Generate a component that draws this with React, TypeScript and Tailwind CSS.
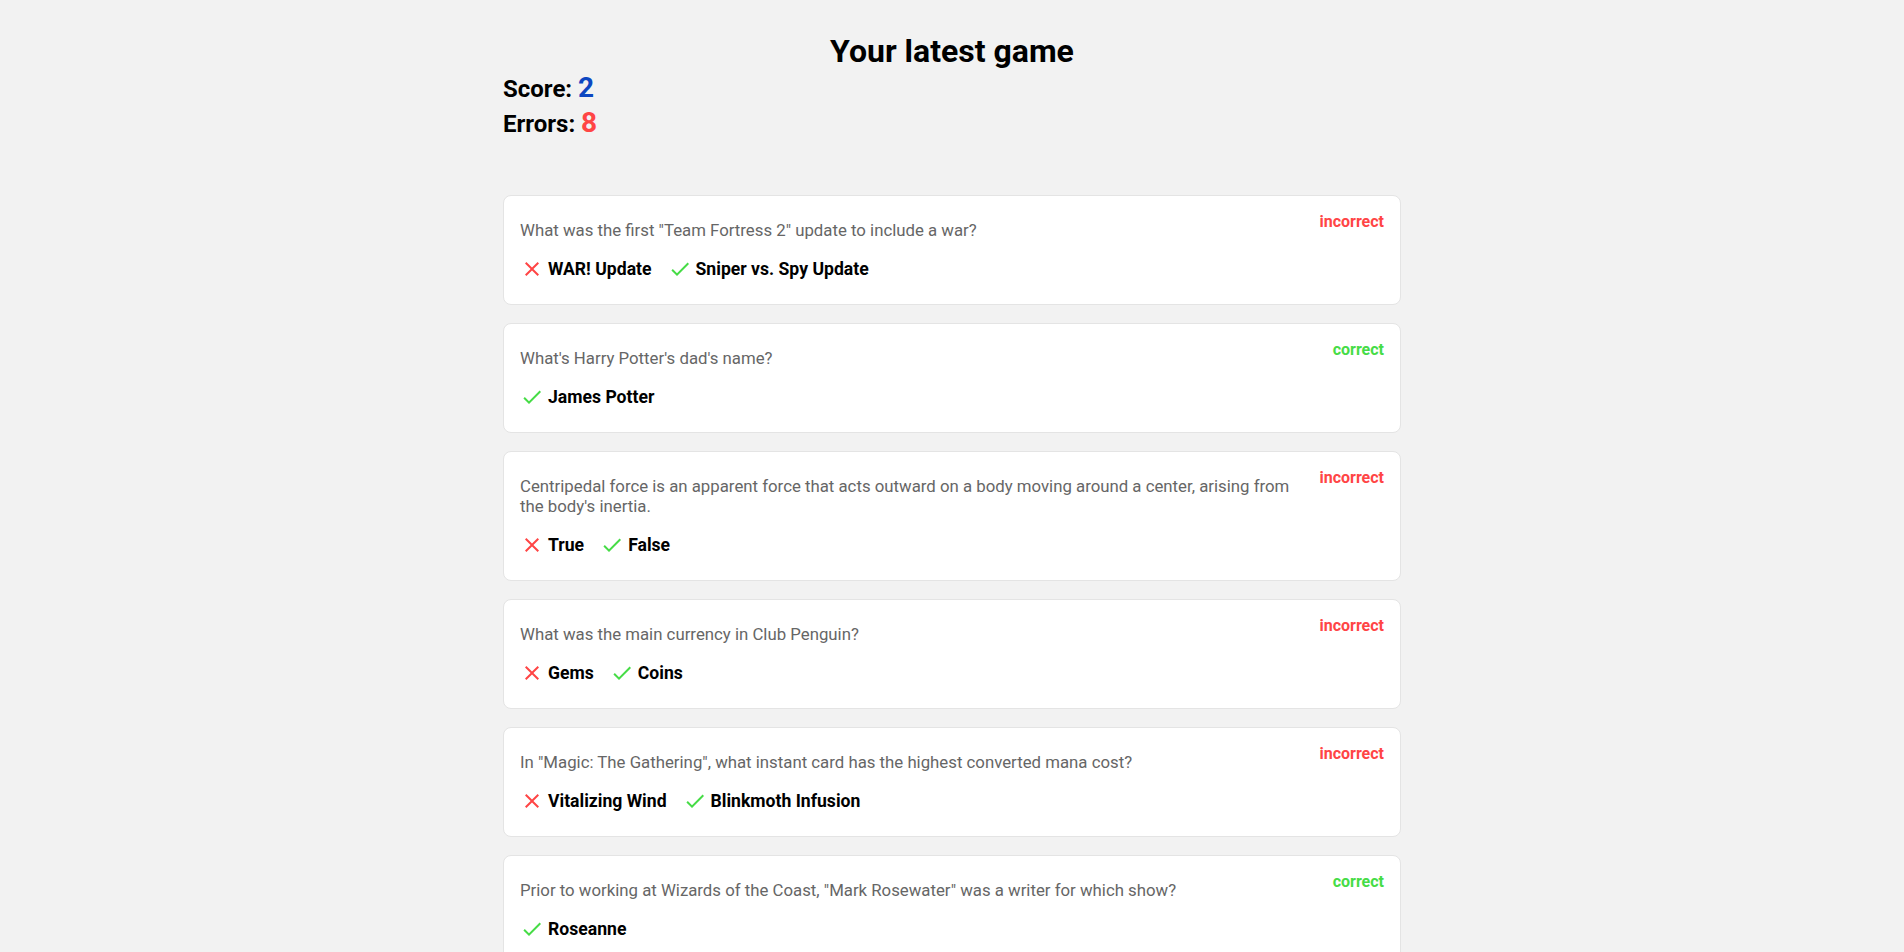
import { MdCheck, MdClose } from "react-icons/md";

type Result = {
  question: string;
  picked: string;
  answer: string;
};

const results: Result[] = [
  { question: 'What was the first "Team Fortress 2" update to include a war?', picked: "WAR! Update", answer: "Sniper vs. Spy Update" },
  { question: "What's Harry Potter's dad's name?", picked: "James Potter", answer: "James Potter" },
  {
    question: "Centripedal force is an apparent force that acts outward on a body moving around a center, arising from the body's inertia.",
    picked: "True",
    answer: "False",
  },
  { question: "What was the main currency in Club Penguin?", picked: "Gems", answer: "Coins" },
  { question: 'In "Magic: The Gathering", what instant card has the highest converted mana cost?', picked: "Vitalizing Wind", answer: "Blinkmoth Infusion" },
  { question: 'Prior to working at Wizards of the Coast, "Mark Rosewater" was a writer for which show?', picked: "Roseanne", answer: "Roseanne" },
  { question: 'In the game "Minecraft", what is the name of the final boss found in The End?', picked: "The Wither", answer: "Ender Dragon" },
  { question: "What is the capital of Australia?", picked: "Sydney", answer: "Canberra" },
  { question: "Which planet in our solar system has the most confirmed moons?", picked: "Jupiter", answer: "Saturn" },
  {
    question: "The Great Wall of China is visible from the surface of the Moon with the naked eye, according to the astronauts who have actually been there.",
    picked: "True",
    answer: "False",
  },
];

function ResultCard({ result }: { result: Result }) {
  const isCorrect = result.picked === result.answer;

  return (
    <div className="bg-white border border-[#e4e4e4] rounded-lg px-4 pt-4 pb-[23px]">
      <div className="flex items-start gap-6">
        <p className="flex-1 mt-2 text-[16.8px] leading-5 text-[#666666]">{result.question}</p>
        <span className={`text-[16px] leading-5 font-bold ${isCorrect ? "text-[#46dc46]" : "text-[#ff4545]"}`}>
          {isCorrect ? "correct" : "incorrect"}
        </span>
      </div>
      <div className="flex items-center gap-4 mt-[17px] h-6">
        {!isCorrect && (
          <div className="flex items-center gap-1">
            <MdClose size={24} className="text-[#ff4545]" />
            <span className="text-[17.6px] leading-6 font-bold text-black">{result.picked}</span>
          </div>
        )}
        <div className="flex items-center gap-1">
          <MdCheck size={24} className="text-[#46dc46]" />
          <span className="text-[17.6px] leading-6 font-bold text-black">{result.answer}</span>
        </div>
      </div>
    </div>
  );
}

export default function App() {
  const score = results.filter((r) => r.picked === r.answer).length;
  const errors = results.length - score;

  return (
    <div className="overflow-x-hidden bg-[#f2f2f2] min-h-screen" style={{ fontFamily: "Roboto, 'Noto Sans', sans-serif" }}>
      <div className="w-screen">
        <div className="w-[898px] mx-auto pt-[31px] pb-[100px]">
          <h1 className="text-center text-[32px] leading-10 font-bold text-black">Your latest game</h1>
          <div className="text-[24px] leading-[34px] font-bold text-black">
            Score: <span className="text-[28px] text-[#0d47c1]">{score}</span>
          </div>
          <div className="text-[24px] leading-[34px] font-bold text-black">
            Errors: <span className="text-[28px] text-[#ff4545]">{errors}</span>
          </div>

          <div className="flex flex-col gap-[18px] mt-[54px]">
            {results.map((r, i) => (
              <ResultCard key={i} result={r} />
            ))}
          </div>
        </div>
      </div>
    </div>
  );
}
